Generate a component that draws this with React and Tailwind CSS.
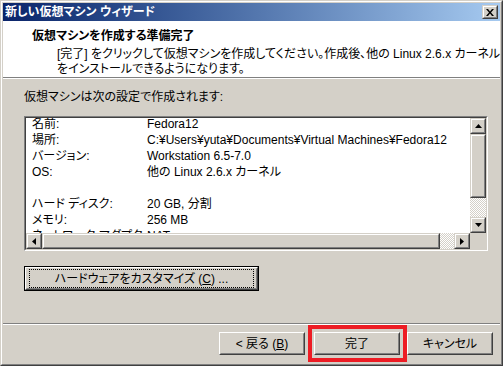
import React from "react";

const FONT = "[font-family:'Liberation_Sans','Noto_Sans_CJK_JP',sans-serif] [font-feature-settings:'palt']";

function Edge({ children, className = "" }) {
  // scrollbar-style raised edge
  return (
    <div className={`border border-t-[#d4d0c8] border-l-[#d4d0c8] border-r-[#404040] border-b-[#404040] ${className}`}>
      <div className="w-full h-full border border-t-white border-l-white border-r-[#808080] border-b-[#808080] bg-[#d4d0c8] flex items-center justify-center">
        {children}
      </div>
    </div>
  );
}

function Btn({ children, className = "" }) {
  return (
    <div className={`border border-t-white border-l-white border-r-[#404040] border-b-[#404040] ${className}`}>
      <div className="w-full h-full border border-t-[#d4d0c8] border-l-[#d4d0c8] border-r-[#808080] border-b-[#808080] bg-[#d4d0c8] flex items-center justify-center text-[12px] leading-[14px] text-black whitespace-nowrap">
        {children}
      </div>
    </div>
  );
}

const Up = () => (
  <svg width="7" height="4" viewBox="0 0 7 4"><polygon points="3.5,0 7,4 0,4" fill="#000" /></svg>
);
const Down = () => (
  <svg width="7" height="4" viewBox="0 0 7 4"><polygon points="0,0 7,0 3.5,4" fill="#000" /></svg>
);
const Left = () => (
  <svg width="4" height="7" viewBox="0 0 4 7"><polygon points="4,0 4,7 0,3.5" fill="#000" /></svg>
);
const Right = () => (
  <svg width="4" height="7" viewBox="0 0 4 7"><polygon points="0,0 4,3.5 0,7" fill="#000" /></svg>
);

const checker = "bg-[repeating-conic-gradient(#ffffff_0_25%,#d4d0c8_0_50%)] bg-[length:2px_2px]";

const rows = [
  ["名前:", "Fedora12"],
  ["場所:", "C:¥Users¥yuta¥Documents¥Virtual Machines¥Fedora12"],
  ["バージョン:", "Workstation 6.5-7.0"],
  ["OS:", "他の Linux 2.6.x カーネル"],
  ["", ""],
  ["ハード ディスク:", "20 GB, 分割"],
  ["メモリ:", "256 MB"],
  ["ネットワーク アダプタ:", "NAT"],
];

export default function App() {
  return (
    <div className={`w-[503px] h-[366px] bg-[#d4d0c8] border border-t-[#d4d0c8] border-l-[#d4d0c8] border-r-[#404040] border-b-[#404040] flex overflow-hidden ${FONT}`}>
      <div className="flex-1 min-w-0 border border-t-white border-l-white border-r-[#808080] border-b-[#808080] p-px flex flex-col">
        {/* Title bar */}
        <div className="h-[18px] bg-linear-to-r from-[#0a246a] to-[#a6caf0] flex items-center justify-between pl-[2px] pr-[2px]">
          <span className="text-white font-bold text-[12px] leading-[14px] whitespace-nowrap">新しい仮想マシン ウィザード</span>
          <Edge className="w-[16px] h-[14px]">
            <svg width="8" height="7" viewBox="0 0 8 7">
              <path d="M0 0h2l2 2.5L6 0h2L5 3.5 8 7H6L4 4.5 2 7H0l3-3.5z" fill="#000" />
            </svg>
          </Edge>
        </div>

        {/* Client */}
        <div className="flex-1 min-w-0 flex flex-col">
          {/* Header */}
          <div className="h-[56px] bg-white pt-[8px] text-black text-[12px] whitespace-nowrap">
            <div className="pl-[29px] font-bold leading-[15px]">仮想マシンを作成する準備完了</div>
            <div className="pl-[54px] mt-[3px] leading-[15px]">
              <div>[完了] をクリックして仮想マシンを作成してください。作成後、他の Linux 2.6.x カーネル</div>
              <div>をインストールできるようになります。</div>
            </div>
          </div>
          <div className="h-px bg-[#808080]" />
          <div className="h-px bg-white" />

          {/* Gray body */}
          <div className="flex-1 min-w-0 flex flex-col">
            <div className="pl-[21px] pt-[11px] flex flex-col items-start">
              <div className="text-[12px] leading-[15px] text-black">仮想マシンは次の設定で作成されます:</div>

              {/* List box */}
              <div className="mt-[11px] w-[464px] h-[135px] border border-t-[#808080] border-l-[#808080] border-r-white border-b-white">
                <div className="w-full h-full border border-t-[#404040] border-l-[#404040] border-r-[#d4d0c8] border-b-[#d4d0c8] flex flex-col bg-[#d4d0c8]">
                  <div className="flex-1 flex min-h-0">
                    <div className="flex-1 min-w-0 bg-white overflow-hidden pl-[6px]">
                      <div className="mt-[-2px] grid grid-cols-[115px_1fr] text-[12px] leading-[16px] text-black whitespace-nowrap">
                        {rows.map(([k, v], i) => (
                          <React.Fragment key={i}>
                            <div className="h-[16px]">{k}</div>
                            <div className="h-[16px]">{v}</div>
                          </React.Fragment>
                        ))}
                      </div>
                    </div>
                    <div className="w-[16px] flex flex-col">
                      <Edge className="h-[16px]"><Up /></Edge>
                      <Edge className="h-[64px]" />
                      <div className={`flex-1 ${checker}`} />
                      <Edge className="h-[16px]"><Down /></Edge>
                    </div>
                  </div>
                  <div className="h-[16px] flex">
                    <Edge className="w-[16px]"><Left /></Edge>
                    <Edge className="w-[398px]" />
                    <div className={`flex-1 ${checker}`} />
                    <Edge className="w-[16px]"><Right /></Edge>
                    <div className="w-[16px] bg-[#d4d0c8]" />
                  </div>
                </div>
              </div>

              {/* Customize button */}
              <div className="mt-[15px] w-[235px] h-[25px] border border-black">
                <Btn className="w-full h-full">
                  <div className="w-full h-full m-[2px] border border-dotted border-black flex items-center justify-center">
                    ハードウェアをカスタマイズ (<span className="underline">C</span>) ...
                  </div>
                </Btn>
              </div>
            </div>

            <div className="flex-1" />
            <div className="h-px bg-[#808080]" />
            <div className="h-px bg-white" />

            {/* Bottom buttons */}
            <div className="pt-[7px] pb-[8px] pr-[7px] flex justify-end">
              <Btn className="w-[86px] h-[23px]">&lt; 戻る (<span className="underline">B</span>)</Btn>
              <div className="relative ml-[9px]">
                <Btn className="w-[86px] h-[23px]">完了</Btn>
                <div className="absolute left-[-6px] right-[-7px] top-[-7px] bottom-[-7px] border-[4px] border-[#ed1c24] pointer-events-none" />
              </div>
              <Btn className="ml-[7px] w-[86px] h-[23px]">キャンセル</Btn>
            </div>
          </div>
        </div>
      </div>
    </div>
  );
}
